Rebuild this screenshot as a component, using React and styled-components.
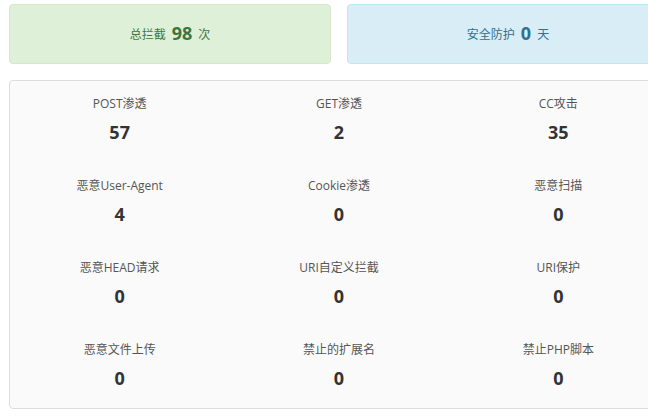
import React from 'react';
import styled, { createGlobalStyle } from 'styled-components';

const Global = createGlobalStyle`
  html, body { margin: 0; padding: 0; background: #fff; overflow: hidden; }
  body { font-family: "Open Sans", "Noto Sans CJK SC", sans-serif; }
`;

const Page = styled.div`
  width: 660px;
  padding: 4px 0 0 9px;
`;

const Summary = styled.div`
  display: grid;
  grid-template-columns: 1fr 1fr;
  column-gap: 16px;
  margin-bottom: 16px;
`;

const tones = {
  green: { bg: '#dff0d8', border: '#d6e9c6', color: '#3c763d' },
  blue: { bg: '#d9edf7', border: '#bce8f1', color: '#31708f' },
};

const Alert = styled.div`
  height: 58px;
  display: flex;
  align-items: center;
  justify-content: center;
  background: ${p => tones[p.$tone].bg};
  border: 1px solid ${p => tones[p.$tone].border};
  border-radius: 4px;
  color: ${p => tones[p.$tone].color};
  font-size: 12px;
  span { margin: 0 4px; }
  b { font-size: 18px; font-weight: 700; margin: 0 6px; position: relative; top: -1px; }
`;

const Panel = styled.div`
  background: #fafafa;
  border: 1px solid #ddd;
  border-radius: 4px;
  padding: 14px 0 18px;
  display: grid;
  grid-template-columns: repeat(3, 1fr);
  row-gap: 33px;
`;

const Cell = styled.div`
  display: flex;
  flex-direction: column;
  align-items: center;
`;

const Label = styled.div`
  font-size: 12px;
  line-height: 18px;
  color: #555;
`;

const Num = styled.div`
  margin-top: 7px;
  font-size: 18px;
  line-height: 24px;
  font-weight: 700;
  color: #333;
`;

const items = [
  ['POST渗透', 57], ['GET渗透', 2], ['CC攻击', 35],
  ['恶意User-Agent', 4], ['Cookie渗透', 0], ['恶意扫描', 0],
  ['恶意HEAD请求', 0], ['URI自定义拦截', 0], ['URI保护', 0],
  ['恶意文件上传', 0], ['禁止的扩展名', 0], ['禁止PHP脚本', 0],
];

export default function App() {
  return (
    <Page>
      <Global />
      <Summary>
        <Alert $tone="green">总拦截<b>98</b>次</Alert>
        <Alert $tone="blue">安全防护<b>0</b>天</Alert>
      </Summary>
      <Panel>
        {items.map(([name, n]) => (
          <Cell key={name}>
            <Label>{name}</Label>
            <Num>{n}</Num>
          </Cell>
        ))}
      </Panel>
    </Page>
  );
}
